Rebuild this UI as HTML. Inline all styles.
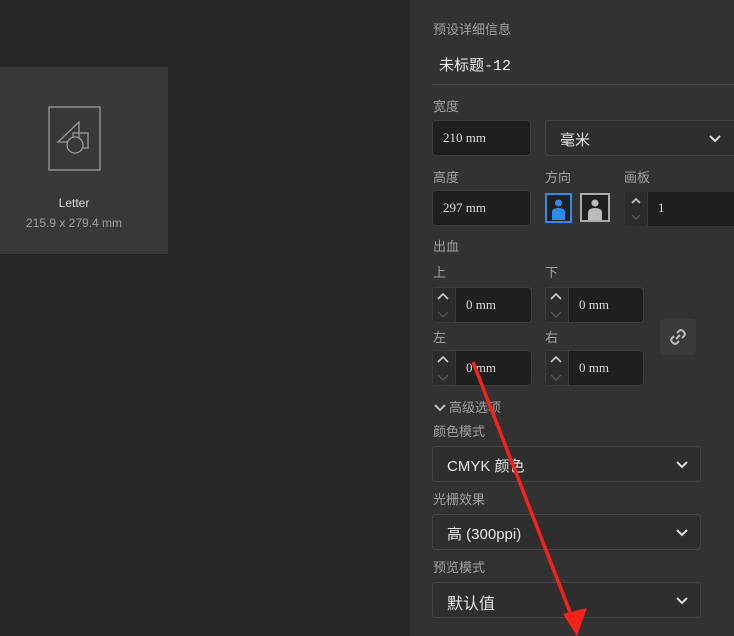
<!DOCTYPE html>
<html><head><meta charset="utf-8"><style>
body{margin:0;width:734px;height:636px;background:#262626;position:relative;overflow:hidden;font-family:"Liberation Sans","Noto Sans CJK SC",sans-serif;}
.a{position:absolute}
.lbl{position:absolute;color:#a0a0a0;font-size:13px;line-height:16px}
.in{position:absolute;background:#1f1f1f;border:1px solid #3c3c3c;border-radius:4px;box-sizing:border-box;color:#ddd;font-family:"Liberation Serif","Noto Serif CJK SC",serif;font-size:13px}
.dd{position:absolute;border:1px solid #444;border-radius:4px;box-sizing:border-box;color:#e6e6e6;font-size:15px;background:#2e2e2e}
.chev{position:absolute;right:12px;top:14px}
.st{position:absolute;left:0;top:0;bottom:0;width:22px;background:#2c2c2c;border-right:1px solid #3a3a3a}
</style></head><body>
<div class="a" style="left:410px;top:0;width:324px;height:636px;background:#323232"></div>
<div class="a" style="left:0;top:67px;width:168px;height:187px;background:#383838"></div>
<svg class="a" style="left:48px;top:106px" width="54" height="66" viewBox="0 0 54 66" fill="none" stroke="#9a9a9a" stroke-width="1.3">
<rect x="1" y="1" width="51" height="63"/>
<path d="M31 16 L31 36 L10 36 Z"/><rect x="25" y="27" width="15" height="15"/><circle cx="27" cy="39" r="8" fill="#383838"/></svg>
<div class="a" style="left:0;top:196px;width:148px;text-align:center;color:#ddd;font-size:12px">Letter</div>
<div class="a" style="left:0;top:216px;width:148px;text-align:center;color:#a0a0a0;font-size:12px">215.9 x 279.4 mm</div>

<div class="lbl" style="left:433px;top:22px">预设详细信息</div>
<div class="a" style="left:439px;top:54px;color:#eee;font-size:15px;font-family:'Liberation Mono','Noto Sans CJK SC',monospace">未标题-12</div>
<div class="a" style="left:432px;top:84px;width:302px;height:1px;background:#4a4a4a"></div>
<div class="lbl" style="left:433px;top:99px">宽度</div>
<div class="in" style="left:432px;top:120px;width:99px;height:36px;padding:9px 10px">210 mm</div>
<div class="dd" style="left:545px;top:120px;width:200px;height:36px;padding:8px 14px">毫米<svg class="chev" style="right:23px" width="12" height="8"><path d="M1 1L6 6L11 1" stroke="#ddd" stroke-width="2" fill="none"/></svg></div>
<div class="lbl" style="left:433px;top:170px">高度</div>
<div class="lbl" style="left:545px;top:170px">方向</div>
<div class="lbl" style="left:624px;top:170px">画板</div>
<div class="in" style="left:432px;top:190px;width:99px;height:36px;padding:9px 10px">297 mm</div>
<svg class="a" style="left:545px;top:193px" width="66" height="30">
<rect x="1" y="1" width="25" height="28" fill="#1f1f1f" stroke="#2d8ceb" stroke-width="2"/><circle cx="13.5" cy="10" r="3.5" fill="#2d8ceb"/><path d="M7 27 V19 Q7 15 13.5 15 Q20 15 20 19 V27Z" fill="#2d8ceb"/>
<rect x="36" y="1" width="28" height="27" fill="#1f1f1f" stroke="#aaa" stroke-width="2"/><circle cx="50" cy="10" r="3.5" fill="#bbb"/><path d="M43 27 V20 Q43 15 50 15 Q57 15 57 20 V27Z" fill="#bbb"/></svg>
<div class="in" style="left:624px;top:191px;width:120px;height:36px;padding:8px 0 0 33px;border-color:#333"><div class="st"><svg style="position:absolute;left:6px;top:6px" width="10" height="6"><path d="M1 5L5 1L9 5" stroke="#ccc" stroke-width="1.6" fill="none"/></svg><svg style="position:absolute;left:6px;top:22px" width="10" height="6"><path d="M1 1L5 5L9 1" stroke="#555" stroke-width="1.4" fill="none"/></svg></div>1</div>
<div class="lbl" style="left:433px;top:239px">出血</div>
<div class="lbl" style="left:433px;top:265px">上</div>
<div class="lbl" style="left:545px;top:265px">下</div>
<div class="lbl" style="left:433px;top:330px">左</div>
<div class="lbl" style="left:545px;top:330px">右</div>
<div class="in" style="left:432px;top:287px;width:100px;height:36px;padding:9px 0 0 33px"><div class="st"></div>0 mm</div>
<div class="in" style="left:545px;top:287px;width:99px;height:36px;padding:9px 0 0 33px"><div class="st"></div>0 mm</div>
<div class="in" style="left:432px;top:350px;width:100px;height:36px;padding:9px 0 0 33px"><div class="st"></div>0 mm</div>
<div class="in" style="left:545px;top:350px;width:99px;height:36px;padding:9px 0 0 33px"><div class="st"></div>0 mm</div>
<svg class="a" style="left:432px;top:287px" width="220" height="100" fill="none">
<g stroke="#ccc" stroke-width="1.6"><path d="M6 12L11 7L16 12"/><path d="M119 12L124 7L129 12"/><path d="M6 75L11 70L16 75"/><path d="M119 75L124 70L129 75"/></g>
<g stroke="#555" stroke-width="1.3"><path d="M6 25L11 30L16 25"/><path d="M119 25L124 30L129 25"/><path d="M6 88L11 93L16 88"/><path d="M119 88L124 93L129 88"/></g></svg>
<div class="a" style="left:660px;top:319px;width:36px;height:36px;background:#3a3a3a;border-radius:4px"></div>
<svg class="a" style="left:668px;top:327px" width="20" height="20" fill="none" stroke="#bbb" stroke-width="2"><path d="M8 12L12 8"/><path d="M9 6L11 4Q13 2 15.5 4.5Q18 7 16 9L14 11"/><path d="M11 14L9 16Q7 18 4.5 15.5Q2 13 4 11L6 9"/></svg>
<svg class="a" style="left:434px;top:404px" width="12" height="8"><path d="M1 1L6 6L11 1" stroke="#bbb" stroke-width="2" fill="none"/></svg>
<div class="lbl" style="left:449px;top:400px">高级选项</div>
<div class="lbl" style="left:433px;top:424px">颜色模式</div>
<div class="dd" style="left:432px;top:446px;width:269px;height:36px;padding:8px 14px">CMYK 颜色<svg class="chev" width="12" height="8"><path d="M1 1L6 6L11 1" stroke="#ddd" stroke-width="2" fill="none"/></svg></div>
<div class="lbl" style="left:433px;top:492px">光栅效果</div>
<div class="dd" style="left:432px;top:514px;width:269px;height:36px;padding:8px 14px">高 (300ppi)<svg class="chev" width="12" height="8"><path d="M1 1L6 6L11 1" stroke="#ddd" stroke-width="2" fill="none"/></svg></div>
<div class="lbl" style="left:433px;top:560px">预览模式</div>
<div class="dd" style="left:432px;top:582px;width:269px;height:36px;padding:7px 14px;font-size:16px">默认值<svg class="chev" width="12" height="8"><path d="M1 1L6 6L11 1" stroke="#ddd" stroke-width="2" fill="none"/></svg></div>
<svg class="a" style="left:0;top:0" width="734" height="636"><path d="M473 362L570 612" stroke="#f5221b" stroke-width="3.5"/><path d="M563 614L577 636L587 608Z" fill="#f5221b"/></svg>
</body></html>
